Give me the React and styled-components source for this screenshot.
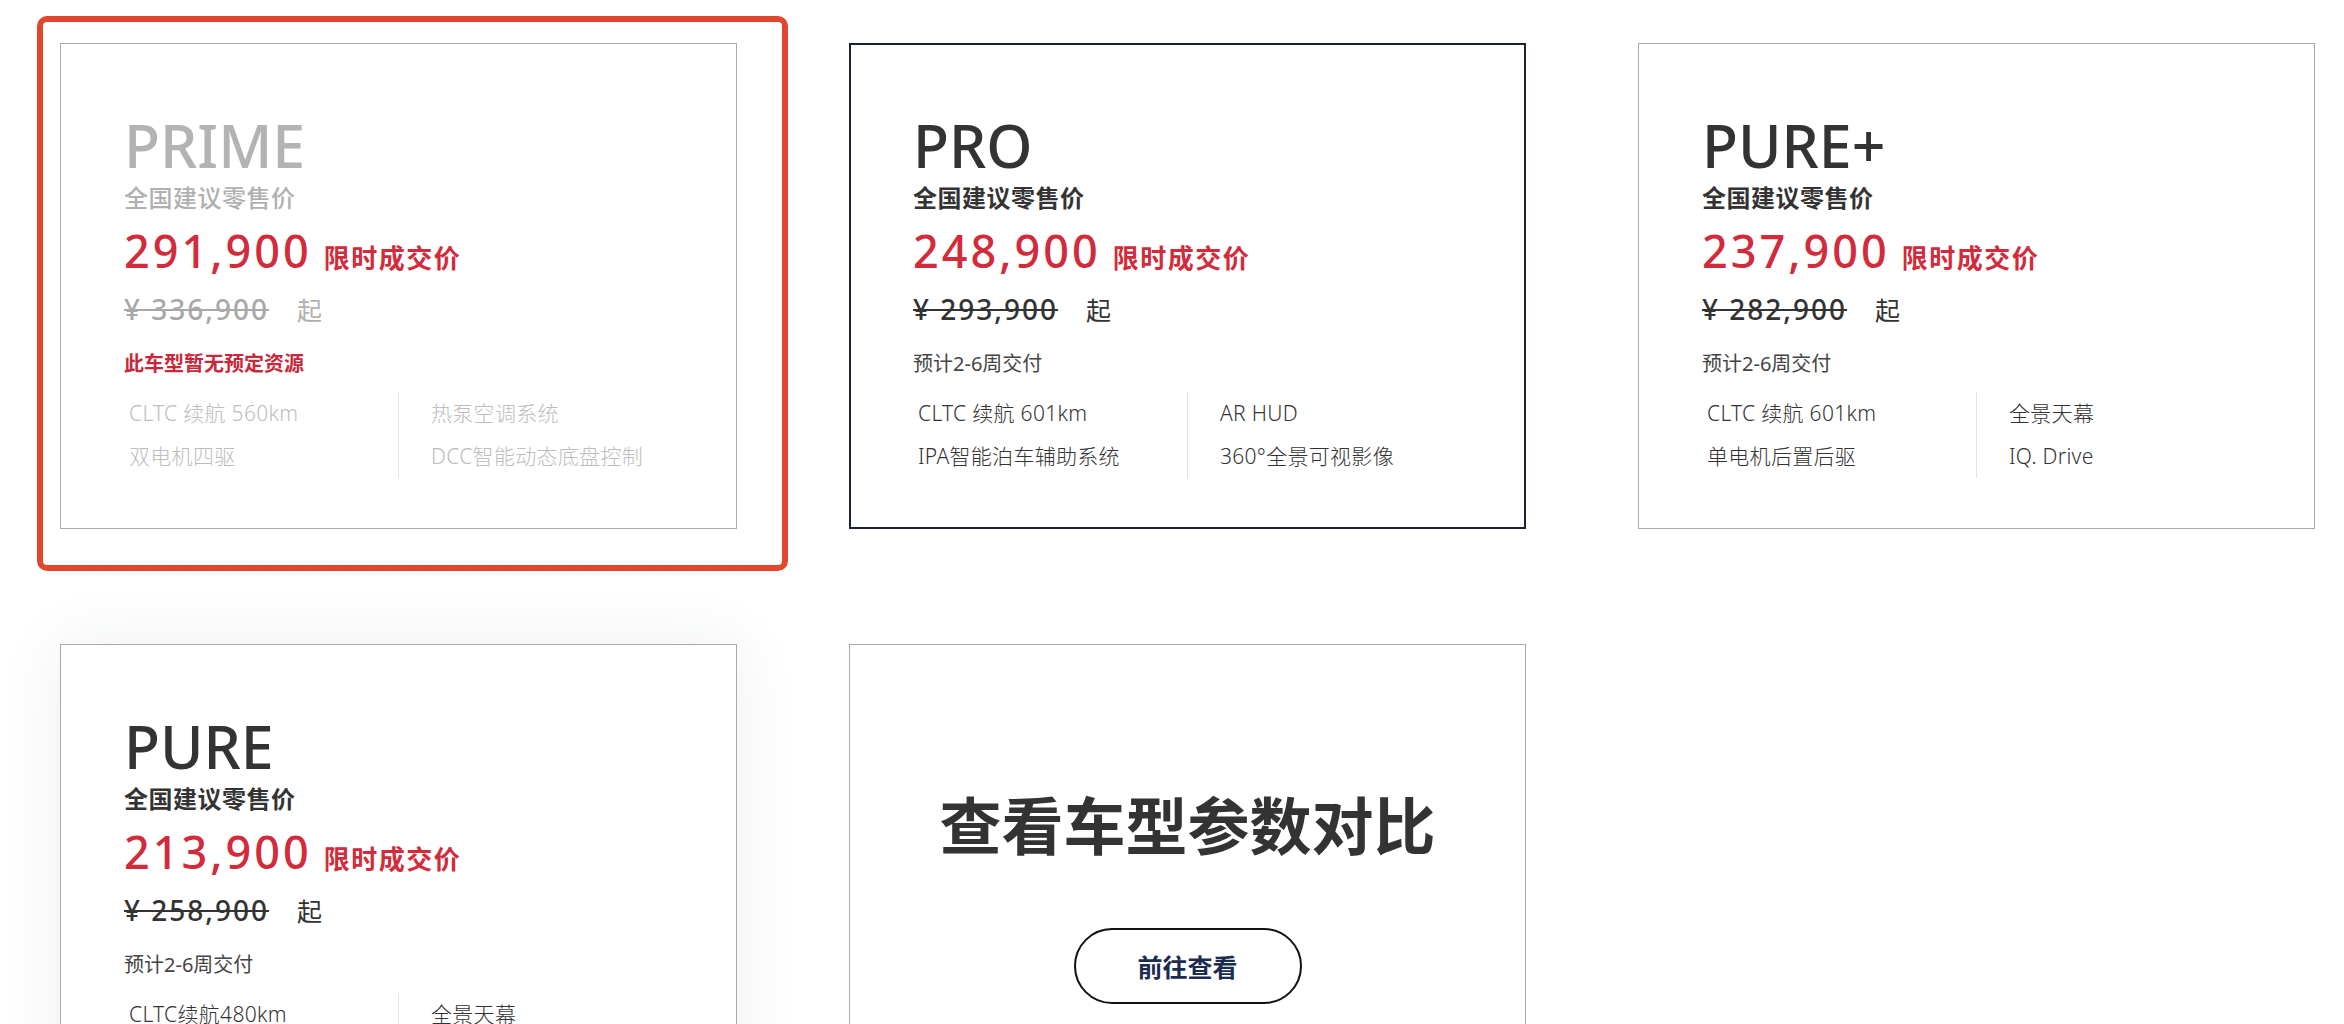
import React from "react";
import styled, { createGlobalStyle, css } from "styled-components";

const Global = createGlobalStyle`
  html, body { margin: 0; padding: 0; background: #ffffff; }
  body { font-family: "Noto Sans", "Noto Sans CJK SC", sans-serif; color: #333; }
  * { box-sizing: border-box; }
`;

const Page = styled.div`
  padding: 43px 0 0 60px;
  min-height: 1024px;
`;

const Grid = styled.div`
  display: grid;
  grid-template-columns: repeat(3, 677px);
  column-gap: 112px;
  row-gap: 115px;
`;

const Card = styled.div`
  position: relative;
  height: 486px;
  background: #fff;
  border: 1px solid #a9a9a9;
  padding: 71px 64px 0 63px;
  display: flex;
  flex-direction: column;
  ${(p) =>
    p.$selected &&
    css`
      border: 2px solid #1a2233;
      padding: 70px 63px 0 62px;
    `}
  ${(p) =>
    p.$shadow &&
    css`
      box-shadow: 0 0 60px rgba(40, 55, 80, 0.08);
    `}
`;

const Highlight = styled.div`
  position: absolute;
  top: -28px;
  left: -24px;
  right: -52px;
  bottom: -43px;
  border: 6px solid #e1472e;
  border-radius: 10px;
  pointer-events: none;
`;

const Title = styled.div`
  font-size: 59px;
  line-height: 60px;
  font-weight: 500;
  color: ${(p) => (p.$muted ? "#b3b3b3" : "#333333")};
`;

const Label = styled.div`
  margin-top: 8px;
  font-size: 24px;
  line-height: 30px;
  letter-spacing: 0.5px;
  font-weight: ${(p) => (p.$muted ? 500 : 600)};
  color: ${(p) => (p.$muted ? "#b0b0b0" : "#333333")};
`;

const PriceRow = styled.div`
  margin-top: 13px;
  display: flex;
  align-items: baseline;
  height: 50px;
  line-height: 50px;
`;

const Price = styled.span`
  font-size: 45px;
  font-weight: 500;
  letter-spacing: 3px;
  color: #d22b3b;
`;

const PriceTag = styled.span`
  margin-left: 12px;
  font-size: 26px;
  font-weight: 700;
  letter-spacing: 1.5px;
  color: #d22b3b;
`;

const OrigRow = styled.div`
  margin-top: 15px;
  display: flex;
  align-items: baseline;
  height: 36px;
  line-height: 36px;
`;

const Orig = styled.span`
  font-size: 28px;
  font-weight: 500;
  letter-spacing: 2px;
  color: ${(p) => (p.$muted ? "#a8a8a8" : "#333333")};
  text-decoration: line-through;
  text-decoration-thickness: 2px;
`;

const Qi = styled.span`
  margin-left: 28px;
  font-size: 25px;
  font-weight: 400;
  color: ${(p) => (p.$muted ? "#b0b0b0" : "#333333")};
`;

const Note = styled.div`
  margin-top: 24px;
  font-size: 20px;
  line-height: 26px;
  font-weight: ${(p) => (p.$alert ? 700 : 400)};
  color: ${(p) => (p.$alert ? "#c8283a" : "#444444")};
`;

const Specs = styled.div`
  margin-top: 15px;
  display: grid;
  grid-template-columns: 1fr 1fr;
`;

const SpecCol = styled.div`
  display: flex;
  flex-direction: column;
  gap: 13px;
  padding: 6px 0 7px ${(p) => (p.$right ? "32px" : "5px")};
  border-left: ${(p) => (p.$right ? "1px solid #e3e3e3" : "none")};
`;

const SpecItem = styled.div`
  font-size: 21px;
  line-height: 30px;
  letter-spacing: 0.3px;
  font-weight: 300;
  white-space: nowrap;
  color: ${(p) => (p.$muted ? "#bdbdbd" : "#333333")};
`;

const CompareCard = styled(Card)`
  align-items: center;
  padding: 146px 0 0 0;
`;

const CompareTitle = styled.div`
  font-size: 62px;
  line-height: 70px;
  font-weight: 600;
  color: #333333;
`;

const GoButton = styled.button`
  margin-top: 67px;
  width: 228px;
  height: 76px;
  border: 2px solid #111111;
  border-radius: 38px;
  background: #fff;
  font-family: "Noto Sans", "Noto Sans CJK SC", sans-serif;
  font-size: 25px;
  font-weight: 700;
  color: #1c2b50;
  cursor: pointer;
`;

const models = [
  {
    name: "PRIME",
    price: "291,900",
    orig: "¥ 336,900",
    note: "此车型暂无预定资源",
    alert: true,
    muted: true,
    highlight: true,
    specs: [
      ["CLTC 续航 560km", "双电机四驱"],
      ["热泵空调系统", "DCC智能动态底盘控制"],
    ],
  },
  {
    name: "PRO",
    price: "248,900",
    orig: "¥ 293,900",
    note: "预计2-6周交付",
    selected: true,
    specs: [
      ["CLTC 续航 601km", "IPA智能泊车辅助系统"],
      ["AR HUD", "360°全景可视影像"],
    ],
  },
  {
    name: "PURE+",
    price: "237,900",
    orig: "¥ 282,900",
    note: "预计2-6周交付",
    specs: [
      ["CLTC 续航 601km", "单电机后置后驱"],
      ["全景天幕", "IQ. Drive"],
    ],
  },
  {
    name: "PURE",
    price: "213,900",
    orig: "¥ 258,900",
    note: "预计2-6周交付",
    shadow: true,
    specs: [
      ["CLTC续航480km", "单电机后置后驱"],
      ["全景天幕", "IQ. Drive"],
    ],
  },
];

function ModelCard({ m }) {
  return (
    <Card $selected={m.selected} $shadow={m.shadow}>
      {m.highlight && <Highlight />}
      <Title $muted={m.muted}>{m.name}</Title>
      <Label $muted={m.muted}>全国建议零售价</Label>
      <PriceRow>
        <Price>{m.price}</Price>
        <PriceTag>限时成交价</PriceTag>
      </PriceRow>
      <OrigRow>
        <Orig $muted={m.muted}>{m.orig}</Orig>
        <Qi $muted={m.muted}>起</Qi>
      </OrigRow>
      <Note $alert={m.alert}>{m.note}</Note>
      <Specs>
        {m.specs.map((col, i) => (
          <SpecCol key={i} $right={i === 1}>
            {col.map((s) => (
              <SpecItem key={s} $muted={m.muted}>
                {s}
              </SpecItem>
            ))}
          </SpecCol>
        ))}
      </Specs>
    </Card>
  );
}

export default function App() {
  return (
    <Page>
      <Global />
      <Grid>
        {models.map((m) => (
          <ModelCard key={m.name} m={m} />
        ))}
        <CompareCard>
          <CompareTitle>查看车型参数对比</CompareTitle>
          <GoButton>前往查看</GoButton>
        </CompareCard>
      </Grid>
    </Page>
  );
}
